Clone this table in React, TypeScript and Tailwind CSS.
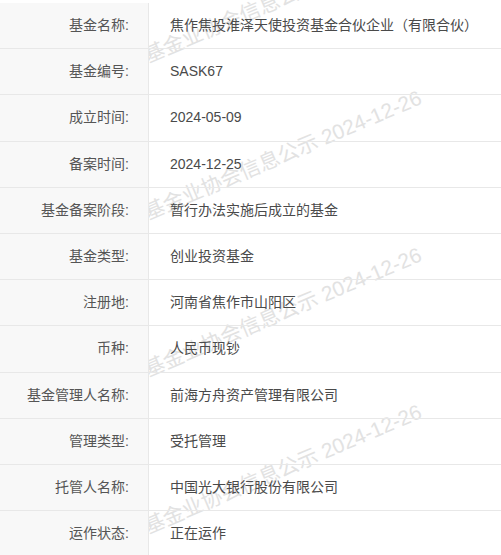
import React from "react";

const rows: [string, string][] = [
  ["基金名称:", "焦作焦投淮泽天使投资基金合伙企业（有限合伙）"],
  ["基金编号:", "SASK67"],
  ["成立时间:", "2024-05-09"],
  ["备案时间:", "2024-12-25"],
  ["基金备案阶段:", "暂行办法实施后成立的基金"],
  ["基金类型:", "创业投资基金"],
  ["注册地:", "河南省焦作市山阳区"],
  ["币种:", "人民币现钞"],
  ["基金管理人名称:", "前海方舟资产管理有限公司"],
  ["管理类型:", "受托管理"],
  ["托管人名称:", "中国光大银行股份有限公司"],
  ["运作状态:", "正在运作"],
];

const marks = [46, 203, 360, 517];

export default function App() {
  return (
    <div
      className="relative w-[501px] h-[555px] overflow-hidden bg-white pt-[3px] text-[14px] text-[#555]"
      style={{ fontFamily: '"Liberation Sans", "Noto Sans CJK SC", sans-serif' }}
    >
      <div className="absolute top-0 bottom-0 left-[149px] right-0 overflow-hidden z-0 pointer-events-none">
        {marks.map((t) => (
          <span
            key={t}
            className="absolute left-0 whitespace-nowrap text-[20.8px] leading-none text-[#e2e2e2] origin-bottom-left -rotate-[23deg]"
            style={{ top: t }}
          >
            基金业协会信息公示 2024-12-26
          </span>
        ))}
      </div>
      <div className="relative z-10 flex flex-col">
        {rows.map(([k, v]) => (
          <div key={k} className="flex h-[46.2px] shrink-0 border-b border-[#e8e8e8]">
            <div className="w-[149px] shrink-0 bg-[#f8f8f8] border-r border-[#e8e8e8] flex items-center justify-end pr-[19px]">
              {k}
            </div>
            <div className="flex-1 flex items-center pl-[21px] text-[#4a4a4a]">{v}</div>
          </div>
        ))}
      </div>
    </div>
  );
}
